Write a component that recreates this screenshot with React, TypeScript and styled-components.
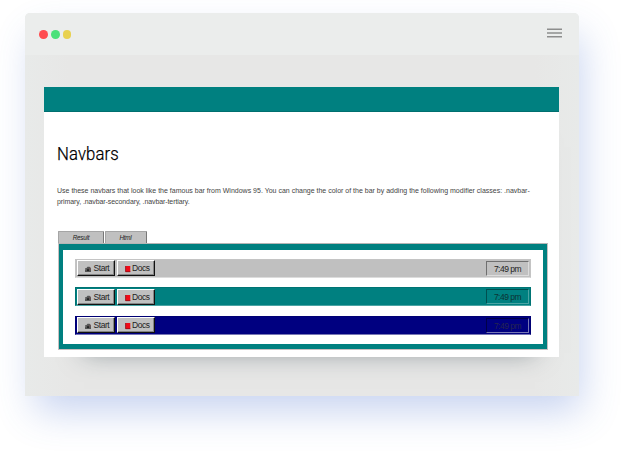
import React from "react";
import styled, { createGlobalStyle } from "styled-components";

const GlobalStyle = createGlobalStyle`
  * { box-sizing: border-box; }
  body { margin: 0; background: #fff; font-family: "Liberation Sans", Arial, sans-serif; }
`;

const Stage = styled.main`
  width: 624px;
  height: 453px;
  padding: 13px 0 0 25px;
  overflow: hidden;
`;

const BrowserWindow = styled.section`
  width: 553.5px;
  height: 383px;
  background: linear-gradient(90deg, #e8eae9, #e7e7e6 8%, #e7e7e6 92%, #e8eae9);
  border-radius: 5px 5px 0 0;
  box-shadow: 6px 19px 38px -4px rgba(70, 110, 205, 0.3);
`;

const TitleBar = styled.header`
  height: 42px;
  padding: 0 17px 0 14px;
  display: flex;
  align-items: center;
  justify-content: space-between;
  background: #ebedec;
  border-radius: 5px 5px 0 0;
`;

const Lights = styled.div`
  display: flex;
  gap: 3px;
  padding-top: 1px;
`;

const Light = styled.span<{ $color: string }>`
  width: 8.8px;
  height: 8.8px;
  border-radius: 50%;
  background: ${(p) => p.$color};
`;

const MenuIcon = styled.svg`
  display: block;
  width: 15px;
  height: 10px;
  margin-top: -2px;
`;

const Page = styled.article`
  width: 515px;
  height: 270px;
  margin: 32px 0 0 19px;
  background: #fff;
  box-shadow: 8px 28px 24px -32px rgba(50, 70, 80, 0.5);
`;

const PageBanner = styled.div`
  height: 24.5px;
  background: #008080;
  border-bottom: 1px solid #006f6f;
`;

const Content = styled.div`
  padding: 30px 11px 0 13px;
`;

const Heading = styled.h1`
  margin: 0;
  height: 24px;
  font-size: 19px;
  line-height: 24px;
  font-family: "Roboto", "Liberation Sans", sans-serif;
  font-weight: 300;
  letter-spacing: 0.1px;
  color: #000;
  transform: scaleX(0.88);
  transform-origin: left center;
  -webkit-text-stroke: 0.25px #000;
`;

const Intro = styled.p`
  margin: 20.5px 0 0;
  height: 45px;
  font-size: 7px;
  line-height: 10.5px;
  color: #444;
  white-space: nowrap;
`;

const IntroEnding = styled.span`
  letter-spacing: -0.09px;
`;

const Tabs = styled.div`
  display: flex;
  gap: 0.5px;
  margin-left: 1px;
  height: 12px;
`;

const Tab = styled.div<{ $width: number }>`
  width: ${(p) => p.$width}px;
  border: 1px solid #a5a5a5;
  border-right-color: #777;
  border-bottom: 0;
  border-radius: 1px 1px 0 0;
  background: #c0c0c0;
  font-size: 6.3px;
  font-style: italic;
  line-height: 11px;
  letter-spacing: -0.2px;
  text-align: center;
  color: #222;
`;

const ResultPanel = styled.div`
  margin-left: 1px;
  width: 490px;
  height: 107px;
  border: 1px solid #c9bfbf;
  border-top-color: #b5b5b5;
  background: #008080;
  padding: 6px 4px 5px;
`;

const PanelBody = styled.div`
  height: 94px;
  padding: 8.5px 12px 0;
  background: #fff;
  display: flex;
  flex-direction: column;
  gap: 9.5px;
`;

const bars = {
  plain: { bg: "#c0c0c0", light: "#dcdcdc", dark: "#c4c4c4", shade: "#6f6f6f", text: "#222" },
  secondary: { bg: "#008080", light: "#4aa4a4", dark: "#007474", shade: "#004f50", text: "#0c3334" },
  primary: { bg: "#000080", light: "#7777b4", dark: "#000074", shade: "#000048", text: "#25254f" },
};
type Kind = keyof typeof bars;

const Navbar = styled.nav<{ $kind: Kind }>`
  height: 19px;
  padding: 1px;
  display: flex;
  align-items: center;
  gap: 2px;
  background: ${(p) => bars[p.$kind].bg};
  border: 1px solid ${(p) => bars[p.$kind].dark};
  border-bottom-color: ${(p) => bars[p.$kind].light};
`;

const NavButton = styled.button<{ $width: number; $gap: number }>`
  width: ${(p) => p.$width}px;
  height: 16px;
  padding: 0 0 0 6px;
  display: flex;
  align-items: center;
  gap: ${(p) => p.$gap}px;
  border: 1px solid;
  border-color: #fff #111 #111 #fff;
  box-shadow: inset -1px -1px #858585;
  background: #c0c0c0;
  color: #222;
  font-family: inherit;
  font-size: 8.5px;
  line-height: 14px;
  letter-spacing: -0.45px;
`;

const ButtonIcon = styled.svg`
  width: 8px;
  height: 8px;
  flex: none;
  margin-top: 2px;
`;

const Clock = styled.time<{ $kind: Kind }>`
  width: 43px;
  height: 15px;
  margin-left: auto;
  border: 1px solid;
  border-color: ${(p) => `${bars[p.$kind].shade} ${bars[p.$kind].light} ${bars[p.$kind].light} ${bars[p.$kind].shade}`};
  color: ${(p) => bars[p.$kind].text};
  font-size: 8.5px;
  line-height: 14px;
  letter-spacing: -0.5px;
  text-align: center;
`;

const StartIcon = () => (
  <ButtonIcon viewBox="0 0 8 8">
    <path d="M1 3h1.5l1-1.2h2L7 3v4H1z" fill="#555" />
    <path d="M3 4.2h2v1.9H3z" fill="#222" />
    <path d="M1.2 3.4h1v1h-1z" fill="#999" />
    <path d="M5.6 3.2h1v1h-1z" fill="#985555" />
  </ButtonIcon>
);

const BookIcon = () => (
  <ButtonIcon viewBox="0 0 8 8">
    <path d="M1.5 1h4.8v6H1.5z" fill="#f00a18" />
    <path d="M1.6 1v5.7h4.7" fill="none" stroke="#8b1118" strokeWidth="0.8" />
  </ButtonIcon>
);

const Taskbar = ({ kind }: { kind: Kind }) => (
  <Navbar $kind={kind}>
    <NavButton $width={37.5} $gap={1.5}><StartIcon />Start</NavButton>
    <NavButton $width={38.5} $gap={0.5}><BookIcon />Docs</NavButton>
    <Clock $kind={kind}>7:49 pm</Clock>
  </Navbar>
);

export default function App() {
  return (
    <>
      <GlobalStyle />
      <Stage>
        <BrowserWindow>
          <TitleBar>
            <Lights>
              <Light $color="#ff4c50" />
              <Light $color="#4be17a" />
              <Light $color="#e8d14f" />
            </Lights>
            <MenuIcon viewBox="0 0 15 10">
              <path d="M0 1.2h15M0 5h15M0 8.8h15" stroke="#8d8e8d" strokeWidth="1.6" />
            </MenuIcon>
          </TitleBar>
          <Page>
            <PageBanner />
            <Content>
              <Heading>Navbars</Heading>
              <Intro>
                Use these navbars that look like the famous bar from Windows 95. You can change the color of the bar by adding the following modifier classes: .navbar-<br />
                <IntroEnding>primary, .navbar-secondary, .navbar-tertiary.</IntroEnding>
              </Intro>
              <Tabs>
                <Tab $width={46}>Result</Tab>
                <Tab $width={42}>Html</Tab>
              </Tabs>
              <ResultPanel>
                <PanelBody>
                  <Taskbar kind="plain" />
                  <Taskbar kind="secondary" />
                  <Taskbar kind="primary" />
                </PanelBody>
              </ResultPanel>
            </Content>
          </Page>
        </BrowserWindow>
      </Stage>
    </>
  );
}
